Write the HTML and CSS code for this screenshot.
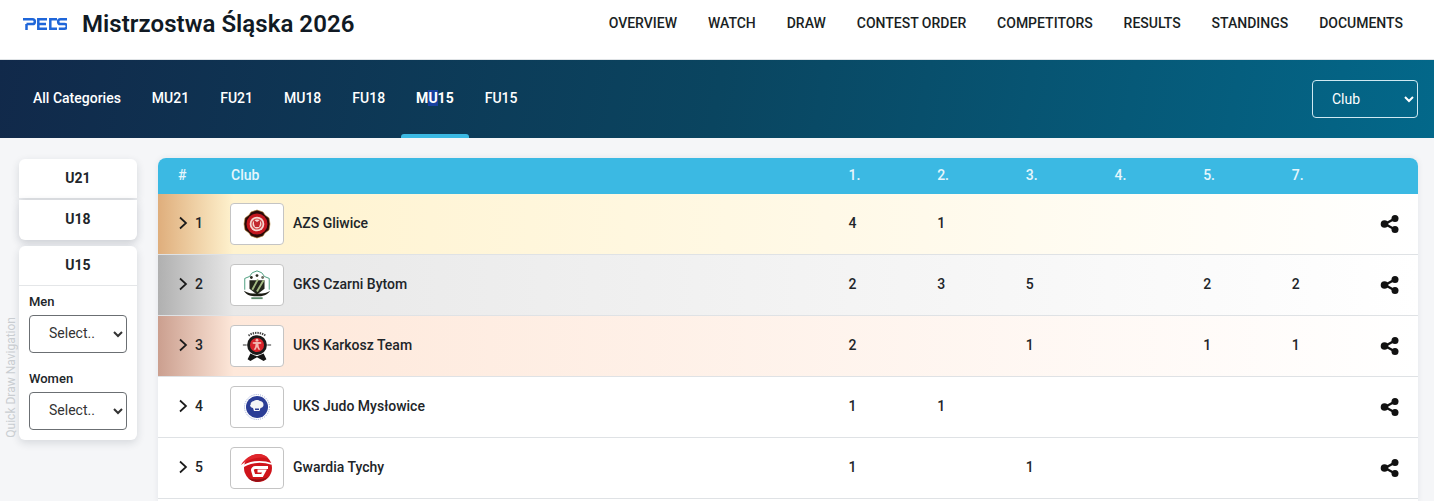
FILE: index.html
```html
<!DOCTYPE html>
<html lang="pl">
<head>
<meta charset="utf-8">
<title>Mistrzostwa Śląska 2026</title>
<link rel="stylesheet" href="styles.css">
</head>
<body>
<header class="topbar">
  <div class="brand">
    <svg class="logo" viewBox="0 0 44 12" aria-label="PECS">
      <g fill="none" stroke="#1f66d9" stroke-width="2.5">
        <path d="M0 1.300h9.500a2.300 2.300 0 0 1 0 4.700H3.500M3.500 6v6"/>
        <path d="M24 1.300H15.300v9.400H24M15 6h8"/>
        <path d="M34 1.300H27.300v9.400H34"/>
        <path d="M44 1.300h-6.500a2.300 2.300 0 0 0 0 4.700h4a2.300 2.300 0 0 1 0 4.700H35.800"/>
      </g>
    </svg>
    <h1 class="title">Mistrzostwa Śląska 2026</h1>
  </div>
  <nav class="mainnav">
    <a>OVERVIEW</a><a>WATCH</a><a>DRAW</a><a>CONTEST ORDER</a><a>COMPETITORS</a><a>RESULTS</a><a>STANDINGS</a><a>DOCUMENTS</a>
  </nav>
</header>
<section class="banner">
  <nav class="cats">
    <a>All Categories</a><a>MU21</a><a>FU21</a><a>MU18</a><a>FU18</a><a class="active">M<span class="sel">U</span>15</a><a>FU15</a>
  </nav>
  <select class="group-select"><option>Club</option></select>
</section>
<main class="content">
  <aside class="side">
    <div class="side-label">Quick Draw Navigation</div>
    <div class="side-cards">
      <div class="card stacked"><div class="card-head">U21</div></div>
      <div class="card stacked second"><div class="card-head">U18</div></div>
      <div class="card open">
        <div class="card-head bordered">U15</div>
        <div class="card-body">
          <label class="fld">Men<select><option>Select..</option></select></label>
          <label class="fld">Women<select><option>Select..</option></select></label>
        </div>
      </div>
    </div>
  </aside>
  <section class="table">
    <div class="row head">
      <div class="c-hash">#</div><div class="c-club">Club</div>
      <div>1.</div><div>2.</div><div>3.</div><div>4.</div><div>5.</div><div>7.</div><div></div>
    </div>

    <div class="row gold">
      <div class="c-pos"><svg class="chev" viewBox="0 0 10 14"><path d="M2 1.500 8 7l-6 5.500"/></svg>1</div>
      <div class="c-club"><span class="crest"><svg viewBox="0 0 32 32"><path fill="#2a0a08" stroke="#b98a3c" stroke-width=".6" d="M16 2l6 2 2 3 4 3 1 6-1 6-4 3-2 3-6 2-6-2-2-3-4-3-1-6 1-6 4-3 2-3z"/><circle cx="16" cy="16" r="10.500" fill="#c3171f"/><circle cx="16" cy="16" r="7.300" fill="#f5d9d2"/><circle cx="16" cy="16" r="5" fill="none" stroke="#cf4a4a" stroke-width="1.200"/><path fill="#c22a30" d="M13 12l3 2 3-2v4l-1 3h-4l-1-3z"/></svg></span><span class="name">AZS Gliwice</span></div>
      <div>4</div><div>1</div><div></div><div></div><div></div><div></div>
      <div class="c-share"><svg class="share" viewBox="0 0 20 20"><use href="#share"/></svg></div>
    </div>

    <div class="row silver">
      <div class="c-pos"><svg class="chev" viewBox="0 0 10 14"><path d="M2 1.500 8 7l-6 5.500"/></svg>2</div>
      <div class="c-club"><span class="crest"><svg viewBox="0 0 34 34"><path fill="none" stroke="#2f8f6b" stroke-width=".9" d="M4 22V10l5-2 3-4 5-2 5 2 3 4 5 2v12"/><circle cx="11" cy="9" r="1.500" fill="#2a2a20"/><circle cx="17" cy="7" r="1.500" fill="#2a2a20"/><circle cx="23" cy="9" r="1.500" fill="#6d6d60"/><path fill="#23261b" d="M9 12h16v9l-8 6-8-6z"/><path stroke="#a3b981" stroke-width="2" d="M12 22l6-11M17 24l7-12"/><path fill="#1c1c14" d="M3 23c5 3 9 3 14 3s9 0 14-3c-3 5-8 6-14 6S6 28 3 23z"/><path fill="#5e8a6c" d="M11 30h12v2H11z"/></svg></span><span class="name">GKS Czarni Bytom</span></div>
      <div>2</div><div>3</div><div>5</div><div></div><div>2</div><div>2</div>
      <div class="c-share"><svg class="share" viewBox="0 0 20 20"><use href="#share"/></svg></div>
    </div>

    <div class="row bronze">
      <div class="c-pos"><svg class="chev" viewBox="0 0 10 14"><path d="M2 1.500 8 7l-6 5.500"/></svg>3</div>
      <div class="c-club"><span class="crest"><svg viewBox="0 0 32 34"><path fill="none" stroke="#444" stroke-width="2.200" stroke-dasharray="1.500 1" d="M7 6c5-4 13-4 18 0"/><circle cx="16" cy="16" r="10.500" fill="#1a1a1a"/><circle cx="16" cy="16" r="7.500" fill="#d8232a"/><circle cx="16" cy="10.800" r="1.500" fill="#f2b7b0"/><path fill="#f2b7b0" d="M11.500 13l4.500-.5 4.500.5v1.500l-3 .5.500 3 1.500 3h-2l-1.500-3-1.500 3h-2l1.500-3 .500-3-3-.5z"/><path fill="#9a9a9a" d="M1 15h4v2H1zM27 15h4v2h-4z"/><path fill="#151515" d="M9 25l7 3 7-3 3 6-3 2-7-4-7 4-3-2z"/></svg></span><span class="name">UKS Karkosz Team</span></div>
      <div>2</div><div></div><div>1</div><div></div><div>1</div><div>1</div>
      <div class="c-share"><svg class="share" viewBox="0 0 20 20"><use href="#share"/></svg></div>
    </div>

    <div class="row">
      <div class="c-pos"><svg class="chev" viewBox="0 0 10 14"><path d="M2 1.500 8 7l-6 5.500"/></svg>4</div>
      <div class="c-club"><span class="crest"><svg viewBox="0 0 32 32"><circle cx="16" cy="16" r="11" fill="#2b3d96"/><circle cx="16" cy="16" r="12.500" fill="none" stroke="#9aa6d6" stroke-dasharray="1 1.200"/><path fill="#f4f4f6" d="M9.500 14c0-3 2-4 3.500-4 1-1.500 5-1.500 6 0 1.500 0 3.500 1 3.500 4 0 2-2 3-3 3l-1 3h-5.500l-1-3c-1 0-3-1-3-3z"/><path fill="#2b3d96" d="M14 17.500h4V19h-4z"/></svg></span><span class="name">UKS Judo Mysłowice</span></div>
      <div>1</div><div>1</div><div></div><div></div><div></div><div></div>
      <div class="c-share"><svg class="share" viewBox="0 0 20 20"><use href="#share"/></svg></div>
    </div>

    <div class="row">
      <div class="c-pos"><svg class="chev" viewBox="0 0 10 14"><path d="M2 1.500 8 7l-6 5.500"/></svg>5</div>
      <div class="c-club"><span class="crest"><svg viewBox="0 0 32 32"><circle cx="17" cy="16" r="14" fill="#cf141b"/><path fill="#8f1015" d="M7 26c5 5 15 5 20-1-6 3-14 3-20 1z"/><path fill="none" stroke="#fff" stroke-width="1.800" d="M0 16C7 10 19 8 31 12"/><path fill="#e0262c" d="M0 13C4 6 11 2 18 2c3 0 6 1 9 4C18 4 8 7 0 13z"/><path fill="none" stroke="#fff" stroke-width="2.800" d="M27 15.500H14.500c-2 0-3.500 1.500-3 3l1.500 5H21l2.500-4.500H16.500"/></svg></span><span class="name">Gwardia Tychy</span></div>
      <div>1</div><div></div><div>1</div><div></div><div></div><div></div>
      <div class="c-share"><svg class="share" viewBox="0 0 20 20"><use href="#share"/></svg></div>
    </div>
    <div class="row tail"></div>
  </section>
</main>
<svg class="defs" aria-hidden="true"><defs>
  <g id="share"><path d="M15 4.500 5 10l10 5.500" fill="none" stroke="#111" stroke-width="2.400"/><circle cx="15" cy="4.500" r="3.500" fill="#111"/><circle cx="4.500" cy="10" r="3.800" fill="#111"/><circle cx="15" cy="15.500" r="3.500" fill="#111"/></g>
</defs></svg>
</body>
</html>
```
FILE: styles.css
```css
* { box-sizing: border-box; }
html, body { margin: 0; padding: 0; }
body {
  height: 501px;
  overflow: hidden;
  background: #f5f6f8;
  font-family: Roboto, "Liberation Sans", sans-serif;
  color: #212529;
  font-size: 14px;
}
.defs { width: 0; height: 0; display: block; }
.topbar {
  height: 60px;
  background: #fff;
  border-bottom: 1px solid #dfe3e6;
  display: flex;
  justify-content: space-between;
  padding: 0 31px 13px 23px;
  align-items: center;
}
.brand { display: flex; align-items: center; gap: 15px; padding-top: 1px; }
.logo { width: 44px; height: 12px; display: block; }
.title { margin: 0; font-size: 24px; font-weight: 600; color: #111a24; line-height: 28px; letter-spacing: .05px; }
.mainnav { display: flex; gap: 30.900px; }
.mainnav a { font-size: 14px; font-weight: 500; color: #1a1f24; line-height: 22px; }
.banner {
  height: 78px;
  background: linear-gradient(100deg, #11294a 0%, #0a4560 50%, #03688a 100%);
  display: flex;
  justify-content: space-between;
  align-items: center;
  padding-right: 16px;
}
.cats { display: flex; height: 78px; padding-left: 18px; }
.cats a {
  color: #fff;
  font-size: 14px;
  font-weight: 500;
  padding: 0 15px 2px;
  margin-right: 1px;
  display: flex;
  align-items: center;
  position: relative;
}
.cats a.active { font-weight: 700; }
.cats a.active::after {
  content: "";
  position: absolute;
  left: 0; right: 0; bottom: 0;
  height: 4px;
  border-radius: 3px 3px 0 0;
  background: #3bb9e3;
}
.sel { background: #17409f; }
.group-select {
  width: 106px;
  height: 38px;
  background: transparent;
  border: 1px solid #cfe9f2;
  border-radius: 4px;
  color: #fff;
  font: 400 14px Roboto, sans-serif;
  padding-left: 15px;
}
.group-select option { color: #000; }
.content {
  display: flex;
  padding: 20px 16px 0 3px;
  gap: 21px;
  align-items: flex-start;
}
.side { display: flex; width: 134px; flex: none; margin-top: 1px; }
.side-label {
  width: 16px;
  writing-mode: vertical-rl;
  transform: rotate(180deg);
  font-size: 12px;
  color: #c9cdd1;
  align-self: flex-end;
  text-align: left;
  line-height: 16px;
  padding-top: 2px;
  white-space: nowrap;
}
.side-cards { width: 118px; display: flex; flex-direction: column; }
.card {
  background: #fff;
  border-radius: 6px;
  box-shadow: 0 3px 8px rgba(30, 40, 60, .14);
}
.stacked { height: 39px; border-radius: 6px 6px 0 0; margin-bottom: 2px; }
.second { height: 40px; border-radius: 0 0 6px 6px; margin-bottom: 6px; box-shadow: 0 3px 8px rgba(30, 40, 60, .2); }
.card-head {
  font-weight: 700;
  font-size: 14px;
  text-align: center;
  line-height: 38px;
  height: 40px;
  color: #212529;
}
.bordered { border-bottom: 1px solid #e4e6e8; }
.card-body { padding: 8px 10px 10px; }
.fld { display: block; font-size: 13px; font-weight: 500; line-height: 16px; margin-bottom: 18px; }
.fld:last-child { margin-bottom: 0; }
.fld select {
  display: block;
  width: 98px;
  height: 38px;
  margin-top: 5px;
  border: 1px solid #6b6f73;
  border-radius: 4px;
  background: #fff;
  color: #333;
  font: 400 14px Roboto, sans-serif;
  padding: 0 0 2px 15px;
}
.table {
  width: 1260px;
  flex: none;
  background: #fff;
  border-radius: 8px 8px 0 0;
  box-shadow: 0 0 6px rgba(30, 40, 60, .08);
}
.row {
  display: grid;
  grid-template-columns: 72px 618.500px repeat(6, 88.67px) 1fr;
  height: 61px;
  align-items: center;
  border-bottom: 1px solid #dfe2e5;
  font-size: 14px;
  font-weight: 500;
  color: #212529;
}
.row > div { padding-bottom: 2px; }
.row > .c-club { padding-bottom: 0; }
.row > .c-share { padding-bottom: 0; }
.row.head {
  height: 36px;
  background: #3bb9e3;
  color: #e6f6fc;
  border: 0;
  border-radius: 8px 8px 0 0;
  font-weight: 500;
  padding-bottom: 2px;
}
.row.head > div { padding-bottom: 0; }
.row.head > .c-club { padding-left: 1px; }
.c-hash { padding-left: 20px; }
.tail { height: 3px; }
.gold { background: linear-gradient(90deg, #dfae7c 0%, #fff3cf 6%, #fff 100%); }
.silver { background: linear-gradient(90deg, #b0b0b0 0%, #e8e8e8 6%, #fff 100%); }
.bronze { background: linear-gradient(90deg, #cb9f8f 0%, #fee8da 6%, #fff 100%); }
.c-pos { display: flex; align-items: center; padding-left: 20px; gap: 7px; font-weight: 500; }
.chev { width: 10px; height: 14px; flex: none; }
.chev path { fill: none; stroke: #1a1a1a; stroke-width: 1.700; }
.c-club { display: flex; align-items: center; gap: 9px; }
.crest {
  width: 54px;
  height: 42px;
  background: #fff;
  border: 1px solid #c4c4c4;
  border-radius: 4px;
  display: flex;
  align-items: center;
  justify-content: center;
}
.crest svg { width: 32px; height: 32px; display: block; }
.name { font-weight: 500; padding-bottom: 2px; }
.c-share { display: flex; justify-content: flex-end; padding-right: 21px; }
.share { width: 20px; height: 20px; display: block; }
```
